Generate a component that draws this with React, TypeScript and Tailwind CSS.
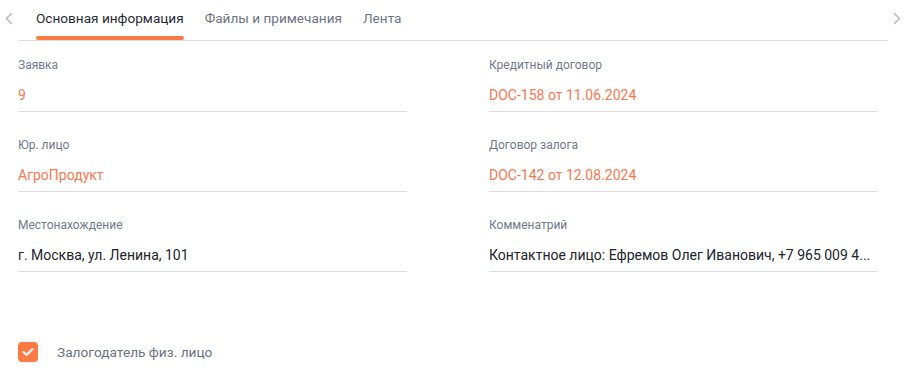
import React from "react";

function ChevronLeft() {
  return (
    <svg width="8" height="13" viewBox="0 0 8 13" fill="none">
      <path d="M6.5 1.5L1.5 6.5L6.5 11.5" stroke="#b8bcc4" strokeWidth="1.6" strokeLinecap="round" strokeLinejoin="round" />
    </svg>
  );
}
function ChevronRight() {
  return (
    <svg width="8" height="13" viewBox="0 0 8 13" fill="none">
      <path d="M1.5 1.5L6.5 6.5L1.5 11.5" stroke="#b8bcc4" strokeWidth="1.6" strokeLinecap="round" strokeLinejoin="round" />
    </svg>
  );
}

function Field({ label, value, accent }: { label: string; value: string; accent?: boolean }) {
  return (
    <div className="flex flex-col border-b border-[#dcdde3] pb-[6px]">
      <div className="text-[12px] leading-[16px] text-[#6f7a8c]">{label}</div>
      <div
        className={
          "mt-[12px] text-[14px] leading-[20px] truncate " +
          (accent ? "text-[#f9774e]" : "text-[#20242e]")
        }
      >
        {value}
      </div>
    </div>
  );
}

export default function App() {
  return (
    <div
      className="w-[905px] h-[386px] bg-white overflow-hidden"
      style={{ fontFamily: "Roboto, 'Noto Sans', sans-serif" }}
    >
      <div className="flex h-[41px]">
        <div className="w-[18px] flex justify-center pt-[12px]">
          <ChevronLeft />
        </div>
        <div className="w-[870px] flex border-b border-[#dcdde3] pl-[18px] gap-[21px]">
          <div className="relative h-[40px] flex items-start pt-[9px]">
            <span className="text-[13.6px] leading-[18px] text-[#262b36]">Основная информация</span>
            <div className="absolute left-0 right-0 bottom-0 h-[4px] rounded-full bg-[#fd7a45]" />
          </div>
          <div className="h-[40px] flex items-start pt-[9px]">
            <span className="text-[13.6px] leading-[18px] text-[#6c7482]">Файлы и примечания</span>
          </div>
          <div className="h-[40px] flex items-start pt-[9px]">
            <span className="text-[13.6px] leading-[18px] text-[#6c7482]">Лента</span>
          </div>
        </div>
        <div className="flex-1 flex justify-center pt-[12px]">
          <ChevronRight />
        </div>
      </div>

      <div className="grid grid-cols-[389px_389px] gap-x-[82px] gap-y-[25px] pl-[18px] pt-[16px]">
        <Field label="Заявка" value="9" accent />
        <Field label="Кредитный договор" value="DOC-158 от 11.06.2024" accent />
        <Field label="Юр. лицо" value="АгроПродукт" accent />
        <Field label="Договор залога" value="DOC-142 от 12.08.2024" accent />
        <Field label="Местонахождение" value="г. Москва, ул. Ленина, 101" />
        <Field label="Комменатрий" value="Контактное лицо: Ефремов Олег Иванович, +7 965 009 4..." />
      </div>

      <div className="flex items-center pl-[18px] mt-[70px]">
        <div className="w-[20px] h-[20px] rounded-[4px] bg-[#fd7a45] flex items-center justify-center">
          <svg width="12" height="10" viewBox="0 0 12 10" fill="none">
            <path d="M1.5 5L4.5 8L10.5 2" stroke="white" strokeWidth="2" strokeLinecap="round" strokeLinejoin="round" />
          </svg>
        </div>
        <span className="ml-[19px] text-[13.7px] leading-[20px] text-[#6a7384]">Залогодатель физ. лицо</span>
      </div>
    </div>
  );
}
